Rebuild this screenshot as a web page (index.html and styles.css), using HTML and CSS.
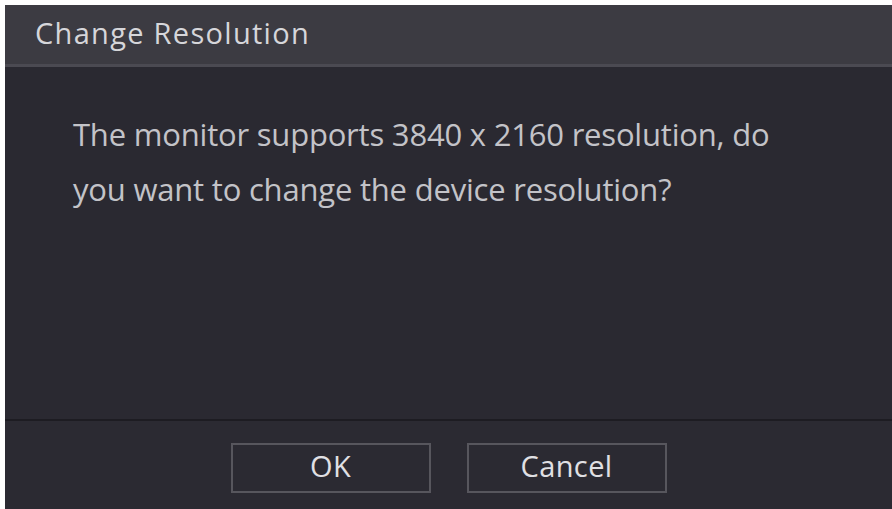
FILE: index.html
```html
<!DOCTYPE html>
<html>
<head>
<meta charset="utf-8">
<link rel="stylesheet" href="styles.css">
</head>
<body>
<div class="dialog">
  <div class="header">Change Resolution</div>
  <div class="body">
    <p class="msg">The monitor supports 3840 x 2160 resolution, do you want to change the device resolution?</p>
  </div>
  <div class="footer">
    <button class="btn">OK</button>
    <button class="btn">Cancel</button>
  </div>
</div>
</body>
</html>
```
FILE: styles.css
```css
html, body {
  margin: 0;
  padding: 0;
  background: #ffffff;
  width: 892px;
  height: 509px;
  overflow: hidden;
}
body {
  padding: 5px 0 0 5px;
  box-sizing: border-box;
  font-family: "Open Sans", "Noto Sans", sans-serif;
}
.dialog {
  height: 504px;
  display: flex;
  flex-direction: column;
  background: #2a2931;
}
.header {
  flex: none;
  height: 62px;
  box-sizing: border-box;
  background: #3c3b42;
  border-bottom: 3px solid #4b4a52;
  color: #d6d6da;
  font-size: 29px;
  padding-left: 30px;
  padding-bottom: 4px;
  display: flex;
  align-items: center;
  letter-spacing: 1.3px;
}
.body {
  flex: 1;
  padding: 40px 0 0 68px;
  border-bottom: 2px solid #1d1c22;
}
.msg {
  margin: 0;
  width: 730px;
  color: #c3c3c8;
  font-size: 31px;
  line-height: 55px;
  letter-spacing: -0.2px;
}
.footer {
  height: 88px;
  flex: none;
  display: flex;
  justify-content: center;
  align-items: flex-start;
  gap: 36px;
  padding-top: 22px;
  box-sizing: border-box;
  background: #2b2a32;
}
.btn {
  width: 200px;
  height: 50px;
  background: #2b2a32;
  border: 2px solid #57565d;
  color: #e0e0e4;
  font-family: "Open Sans", "Noto Sans", sans-serif;
  font-size: 29px;
  letter-spacing: 0.4px;
  padding: 0 0 6px 0;
}
```
